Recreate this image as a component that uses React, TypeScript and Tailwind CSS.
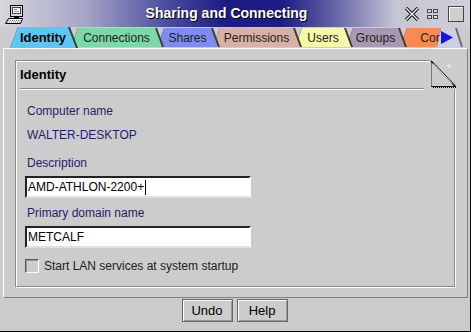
const tabs = [
  { label: "Connections", bg: "bg-[#7cd8a4]", w: "w-[93px]", z: "z-[7]" },
  { label: "Shares", bg: "bg-[#7c8cf0]", w: "w-[63px]", z: "z-[6]" },
  { label: "Permissions", bg: "bg-[#d8b0a6]", w: "w-[89px]", z: "z-[5]" },
  { label: "Users", bg: "bg-[#f8f8a8]", w: "w-[58px]", z: "z-[4]" },
  { label: "Groups", bg: "bg-[#a898b4]", w: "w-[61px]", z: "z-[3]" },
  { label: "Cor", bg: "bg-[#f88a52]", w: "w-[62px]", z: "z-[2]" },
];

function ComputerIcon() {
  return (
    <svg width="19" height="19" viewBox="0 0 19 19">
      <rect x="5.5" y="0.5" width="12" height="11" fill="#d8d8d8" stroke="#000" />
      <rect x="7.5" y="2.5" width="8" height="6" fill="#fff" stroke="#444" />
      <rect x="9" y="4" width="3" height="1" fill="#777" />
      <rect x="9" y="6" width="5" height="1" fill="#999" />
      <rect x="9" y="11.5" width="5" height="1.5" fill="#000" />
      <polygon points="3.5,13.5 17.5,13.5 15.5,18.5 0.5,18.5" fill="#fff" stroke="#000" />
      <line x1="3" y1="15.5" x2="15.5" y2="15.5" stroke="#777" strokeDasharray="1 1" />
      <line x1="2" y1="17" x2="15" y2="17" stroke="#777" strokeDasharray="1 1" />
    </svg>
  );
}

function TitleBar() {
  return (
    <div className="h-[27px] flex items-center bg-[linear-gradient(90deg,#d6d6de_0%,#a6a6c6_18%,#4a4aa0_36%,#1c1c84_48%,#1c1c84_60%,#6a6aaa_72%,#c4c4d6_84%,#d0d0d8_100%)]">
      <div className="ml-[5px] mt-[1px]">
        <ComputerIcon />
      </div>
      <div className="flex-1 pl-[25px] text-center text-[14px] font-bold text-white [text-shadow:1px_1px_0_#000]">
        Sharing and Connecting
      </div>
      <div className="flex items-center mr-[6px]">
        <svg width="16" height="16" viewBox="0 0 16 16">
          <path d="M2 2L14 14M14 2L2 14" stroke="#111" strokeWidth="3.4" />
          <path d="M2 2L14 14M14 2L2 14" stroke="#f4f4f4" strokeWidth="1.4" />
        </svg>
        <svg className="ml-[7px]" width="12" height="11" viewBox="0 0 12 11">
          <rect x="0.5" y="1.5" width="4" height="3" fill="#ddd" stroke="#444" />
          <rect x="6.5" y="1.5" width="4" height="3" fill="#ddd" stroke="#444" />
          <rect x="0.5" y="7.5" width="4" height="3" fill="#ddd" stroke="#444" />
          <rect x="6.5" y="7.5" width="4" height="3" fill="#ddd" stroke="#444" />
        </svg>
        <div className="ml-[9px] w-[16px] h-[16px] border border-[#444] bg-[#cfcfcf] shadow-[inset_1px_1px_0_#fff]" />
      </div>
    </div>
  );
}

function Tabs() {
  return (
    <div className="relative h-[21px] pl-[10px] flex items-end">
      <div className="relative z-[10] w-[68px] h-[21px] bg-[#3a3a3a] [clip-path:polygon(8px_0,calc(100%_-_8px)_0,100%_100%,0_100%)]">
        <div className="mr-[2px] h-full bg-[#5ac8f4] [clip-path:polygon(8px_0,calc(100%_-_8px)_0,100%_100%,0_100%)] flex items-center justify-center font-bold text-[13px] text-black">
          Identity
        </div>
      </div>
      {tabs.map((t) => (
        <div
          key={t.label}
          className={`relative ${t.z} ${t.w} -ml-[7px] mb-[1px] h-[19px] bg-[#3a3a3a] [clip-path:polygon(7px_0,calc(100%_-_7px)_0,100%_100%,0_100%)]`}
        >
          <div
            className={`mr-[2px] h-full ${t.bg} [clip-path:polygon(7px_0,calc(100%_-_7px)_0,100%_100%,0_100%)] flex items-center justify-center text-[12px] text-[#202020]`}
          >
            {t.label}
          </div>
        </div>
      ))}
      <div className="absolute left-[437px] bottom-[1px] z-[20] w-[26px] h-[19px] bg-[#6a6a7a] [clip-path:polygon(4px_0,calc(100%_-_6px)_0,100%_100%,0_100%)]">
        <div className="mr-[2px] h-full bg-[#cdd0e4] [clip-path:polygon(4px_0,calc(100%_-_6px)_0,100%_100%,0_100%)] flex items-center pl-[4px]">
          <svg width="12" height="13" viewBox="0 0 12 13">
            <polygon points="0,0 12,6.5 0,13" fill="#1414e6" />
          </svg>
        </div>
      </div>
    </div>
  );
}

function FoldedCorner() {
  return (
    <svg className="absolute right-[-2px] top-[-1px]" width="27" height="29" viewBox="0 0 27 29">
      <rect x="0" y="0" width="27" height="29" fill="#cccccc" />
      <polygon points="1,1 25,26 1,26" fill="#cccccc" />
      <line x1="1.5" y1="1" x2="1.5" y2="26" stroke="#777" />
      <line x1="1" y1="1" x2="25" y2="26" stroke="#111" strokeWidth="1.6" />
      <line x1="3" y1="3.5" x2="22" y2="23.5" stroke="#fff" />
      <line x1="1" y1="26.5" x2="26" y2="26.5" stroke="#111" />
      <line x1="3" y1="27.5" x2="26" y2="27.5" stroke="#111" strokeDasharray="1 1" />
      <path d="M17 6h4M19 4v4" stroke="#eee" strokeWidth="1" />
    </svg>
  );
}

export default function App() {
  return (
    <div className="w-[471px] h-[332px] bg-[#cccccc] font-['Liberation_Sans',Arial,sans-serif] flex flex-col border-b border-r border-black overflow-hidden">
      <TitleBar />
      <Tabs />
      <div className="ml-[3px] w-[465px] h-[250px] border border-t-white border-l-white border-r-[#808080] border-b-[#808080]">
        <div className="relative ml-[11px] mt-[11px] w-[441px] h-[228px] border border-t-[#8a8a8a] border-l-[#8a8a8a] border-r-white border-b-white">
          <div className="h-full border border-t-white border-l-white border-r-[#8a8a8a] border-b-[#8a8a8a]">
            <div className="h-[26px] flex items-center pl-[3px] text-[13px] font-bold text-black">
              Identity
            </div>
            <div className="ml-[3px] w-[404px] h-[2px] border-t border-t-[#8a8a8a] border-b border-b-white" />
            <div className="pl-[10px] text-[12px] text-[#1e1e6c]">
              <div className="mt-[11px] h-[20px] leading-[20px]">Computer name</div>
              <div className="mt-[4px] h-[20px] leading-[20px]">WALTER-DESKTOP</div>
              <div className="mt-[8px] h-[20px] leading-[20px]">Description</div>
              <div className="mt-[3px] -ml-[2px] w-[226px] h-[22px] bg-white border-2 border-t-[#222] border-l-[#222] border-r-white border-b-[#e0e0e0] flex items-center pl-[1px] text-black">
                AMD-ATHLON-2200+
                <span className="ml-[1px] w-[1px] h-[15px] bg-black" />
              </div>
              <div className="mt-[5px] h-[20px] leading-[20px]">Primary domain name</div>
              <div className="mt-[3px] -ml-[2px] w-[226px] h-[22px] bg-white border-2 border-t-[#222] border-l-[#222] border-r-white border-b-[#e0e0e0] flex items-center pl-[1px] text-black">
                METCALF
              </div>
              <div className="mt-[10px] -ml-[2px] h-[16px] flex items-center gap-[5px] text-[#1c1c1c]">
                <span className="w-[14px] h-[14px] bg-[#cccccc] border border-t-[#555] border-l-[#555] border-r-white border-b-white shadow-[inset_1px_1px_0_#999]" />
                Start LAN services at system startup
              </div>
            </div>
          </div>
          <FoldedCorner />
        </div>
      </div>
      <div className="flex justify-center gap-[4px] mt-[1px] pr-[1px]">
        {["Undo", "Help"].map((b) => (
          <button
            key={b}
            className="w-[51px] h-[23px] bg-[#cccccc] border border-[#666] shadow-[inset_1px_1px_0_#fff,inset_-1px_-1px_0_#999] text-[13px] text-black"
          >
            {b}
          </button>
        ))}
      </div>
    </div>
  );
}
